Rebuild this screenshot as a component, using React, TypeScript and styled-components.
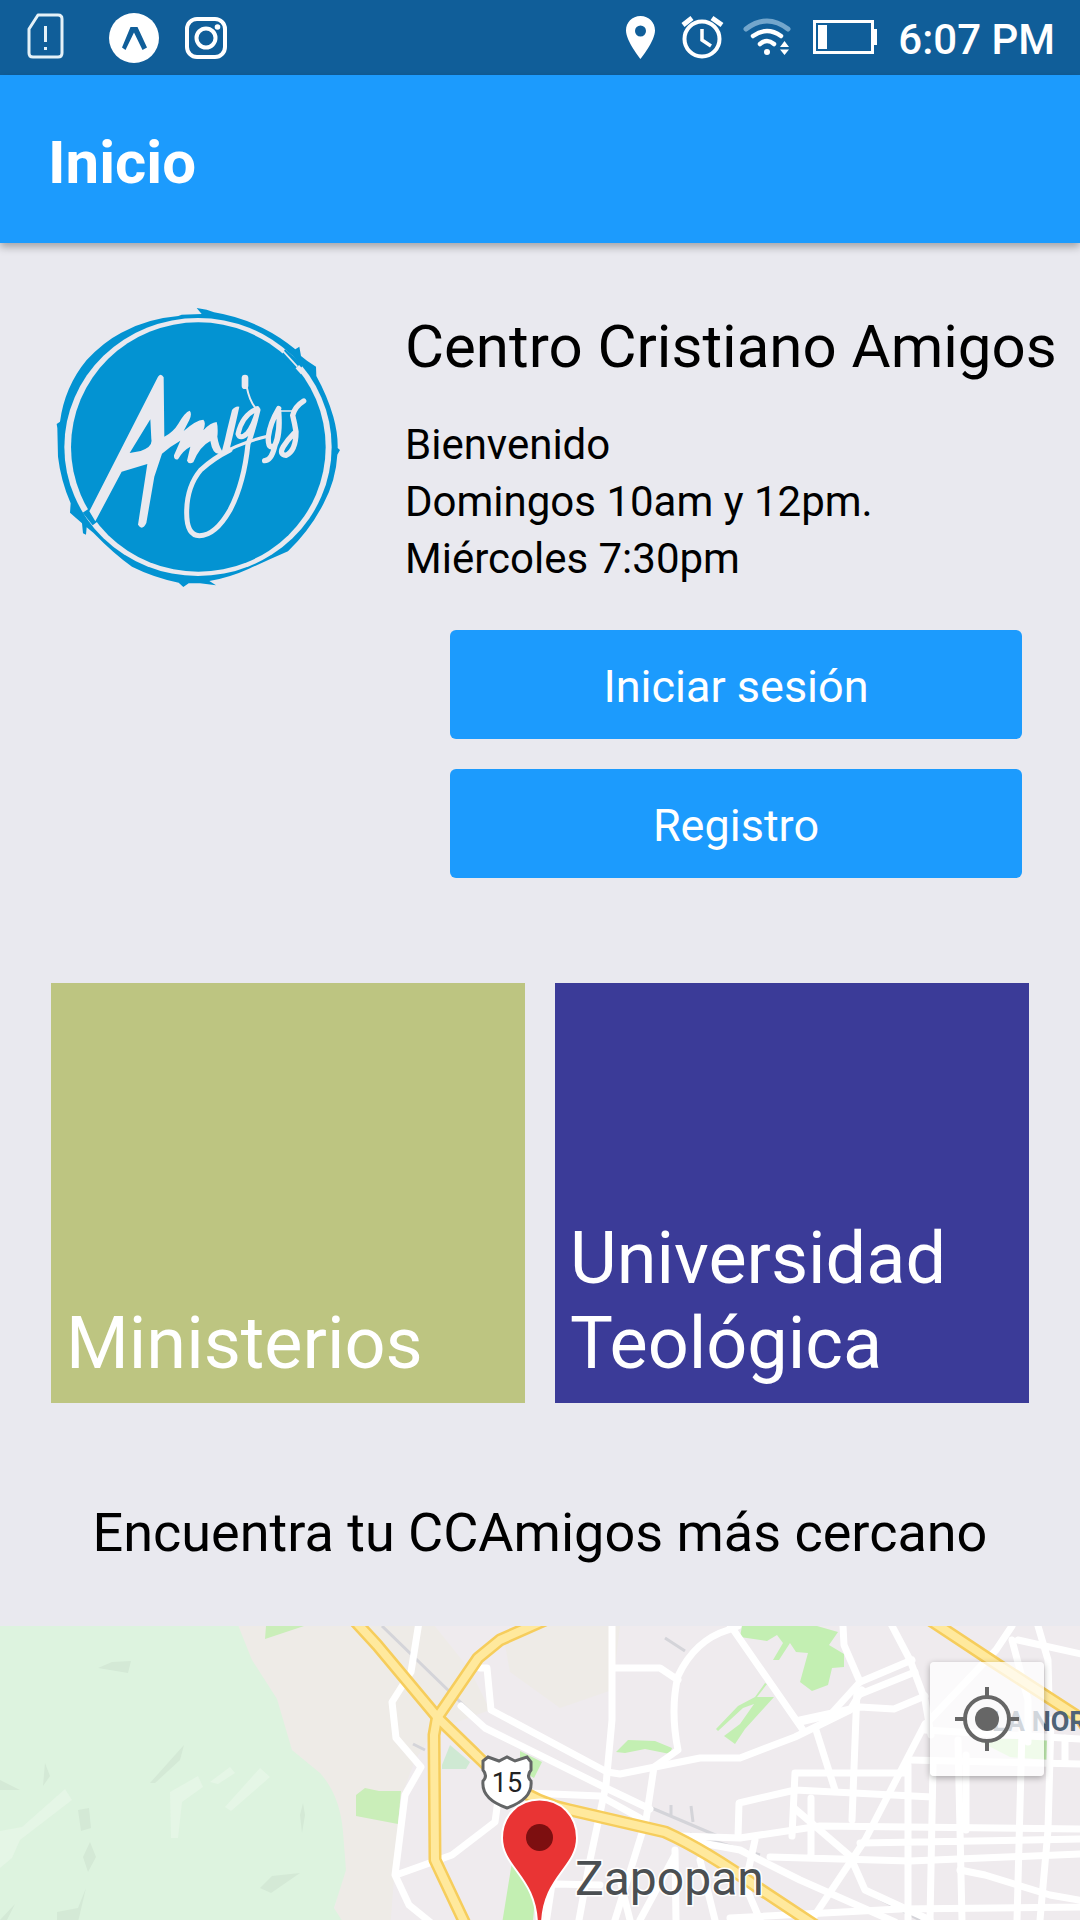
import React from 'react';
import styled, { createGlobalStyle } from 'styled-components';

const GlobalStyle = createGlobalStyle`
  *, *::before, *::after { box-sizing: border-box; }
  body { margin: 0; background: #e9e9ef; }
  h1, h2, p { margin: 0; }
`;

const Screen = styled.div`
  min-height: 100vh;
  display: flex;
  flex-direction: column;
  background: #e9e9ef;
  color: #000;
  font-family: Roboto, 'Liberation Sans', sans-serif;
`;

const StatusBar = styled.div`
  height: 75px;
  display: flex;
  align-items: center;
  justify-content: space-between;
  padding: 0 25px 0 24px;
  background: #105e99;
  color: #fff;
`;

const StatusGroup = styled.div<{ $gap: number }>`
  display: flex;
  align-items: center;
  gap: ${(p) => p.$gap}px;
  svg { display: block; flex: none; }
`;

const Clock = styled.time`
  font-size: 42px;
  line-height: 50px;
  font-weight: 500;
  padding-top: 4px;
`;

const AppBar = styled.header`
  height: 168px;
  display: flex;
  align-items: center;
  padding: 8px 48px 0;
  background: #1c9bfd;
  box-shadow: 0 4px 8px rgba(0, 0, 0, 0.3);
`;

const AppTitle = styled.h1`
  font-size: 60px;
  line-height: 70px;
  font-weight: 700;
  color: #fff;
`;

const Hero = styled.section`
  display: flex;
  align-items: flex-start;
  gap: 57px;
  padding: 54px 0 0 48px;
`;

const Logo = styled.svg`
  flex: none;
  width: 300px;
  height: 300px;
`;

const HeroBody = styled.div`
  flex: 1;
  min-width: 0;
  padding-top: 15px;
`;

const ChurchName = styled.h2`
  font-size: 60px;
  line-height: 70px;
  font-weight: 400;
  white-space: nowrap;
`;

const Schedule = styled.p`
  margin-top: 34px;
  font-size: 42px;
  line-height: 57px;
`;

const Actions = styled.div`
  display: flex;
  flex-direction: column;
  gap: 30px;
  margin: 43px 58px 0 45px;
`;

const ActionButton = styled.button`
  height: 109px;
  border: 0;
  border-radius: 6px;
  padding: 4px 0 0;
  background: #1c9bfd;
  color: #fff;
  font: 400 45px/53px Roboto, 'Liberation Sans', sans-serif;
`;

const Tiles = styled.nav`
  display: grid;
  grid-template-columns: 1fr 1fr;
  gap: 30px;
  padding: 105px 51px 0;
`;

const Tile = styled.a<{ $color: string }>`
  height: 420px;
  display: flex;
  align-items: flex-end;
  padding: 0 15px 17px;
  background: ${(p) => p.$color};
  color: #fff;
  font-size: 72px;
  line-height: 85px;
  text-decoration: none;
`;

const MapTitle = styled.h2`
  padding: 98px 0 61px;
  font-size: 54px;
  line-height: 64px;
  font-weight: 400;
  text-align: center;
`;

const MapArea = styled.section`
  position: relative;
  flex: 1;
  min-height: 294px;
  overflow: hidden;
  background: #eeebee;
`;

const MapCanvas = styled.svg`
  position: absolute;
  inset: 0;
  width: 100%;
  height: 100%;
`;

const LocateButton = styled.button`
  position: absolute;
  top: 36px;
  right: 36px;
  width: 114px;
  height: 114px;
  border: 0;
  border-radius: 4px;
  padding: 0;
  display: grid;
  place-items: center;
  background: rgba(255, 255, 255, 0.74);
  box-shadow: 0 2px 6px rgba(0, 0, 0, 0.3);
`;

const SimIcon = () => (
  <svg width="42" height="50" viewBox="0 0 42 50" fill="none" stroke="#e4f1f8" strokeWidth="3">
    <path d="M14 2H34Q38 2 38 6V40Q38 44 34 44H9Q5 44 5 40V16Z" strokeLinejoin="round" />
    <path d="M21.500 13V29M21.500 34V37" />
  </svg>
);

const ExpoIcon = () => (
  <svg width="50" height="50" viewBox="0 0 50 50">
    <circle cx="25" cy="25" r="25" fill="#fff" />
    <path d="M21.500 14H28.500L38 34.500L33.500 37L25 19.500L16.500 37L13 34.500Z" fill="#105e99" />
  </svg>
);

const InstagramIcon = () => (
  <svg width="44" height="44" viewBox="0 0 44 44" fill="none" stroke="#fff" strokeWidth="4">
    <rect x="3" y="3" width="38" height="38" rx="10" />
    <circle cx="22" cy="22" r="9.500" />
    <circle cx="33.500" cy="11" r="2.800" fill="#fff" stroke="none" />
  </svg>
);

/* Location, alarm, wifi and battery share one 50px-high strip. */
const SystemIcons = () => (
  <svg width="254" height="50" viewBox="624 13 254 50" fill="none" stroke="#fff">
    <path
      d="M640.500 16C632 16 626 22.500 626 30.500C626 41 640.500 59 640.500 59S655 41 655 30.500C655 22.500 649 16 640.500 16ZM640.500 25.500A5.500 5.500 0 1 1 640.500 36.500A5.500 5.500 0 1 1 640.500 25.500Z"
      fill="#fff"
      fillRule="evenodd"
      stroke="none"
    />
    <circle cx="702" cy="39" r="17.500" strokeWidth="4" />
    <path d="M702 29V40L711 46" strokeWidth="3.500" />
    <path d="M683 25L692 18M712 18L722 25" strokeWidth="5" />
    <path d="M746 29Q767 13 788 29" strokeWidth="5" stroke="#73a6cc" strokeLinecap="round" />
    <path d="M753 36Q767 26 781 36M760 44Q767 38 774 44" strokeWidth="4.500" strokeLinecap="round" />
    <circle cx="767" cy="52" r="3" fill="#fff" stroke="none" />
    <path d="M780 47L784.500 41L789 47ZM780 49.500H789L784.500 55Z" fill="#fff" stroke="none" />
    <rect x="814.500" y="21.500" width="58" height="31" strokeWidth="3" />
    <rect x="818" y="25" width="9" height="24" fill="#fff" stroke="none" />
    <path d="M874 29H877V45H874Z" fill="#fff" stroke="none" />
  </svg>
);

const AmigosLogo = () => (
  <Logo viewBox="24 21 900 900" role="img" aria-label="Amigos">
    <path
      d="M415 78L425 74L485 72L470 54L500 59L522 67Q600 80 668 114Q720 140 766 178L778 170L783 198L801 212L828 230L829 258Q862 318 880 380Q894 430 893 474L900 480L892 494Q888 570 850 642Q810 720 744 784Q680 812 627 836Q570 862 508 873L528 886L480 880L446 880L430 891L416 878Q340 862 276 830Q220 790 160 728L140 712L138 734L129 730L126 700L90 668L92 640Q62 570 54 500L52 414L50 402L60 395Q74 290 140 210Q190 156 244 128Q320 86 415 78Z"
      fill="#0393d2"
    />
    <ellipse cx="474" cy="471" rx="401" ry="387" fill="#e9e9ef" />
    <ellipse cx="475" cy="471" rx="382" ry="374" fill="#0393d2" />
    <path d="M735 178L790 225L776 242L722 200ZM128 668L146 656L176 692L158 706Z" fill="#0393d2" />
    <g fill="none" stroke="#e9e9ef">
      <path d="M728 182L772 230" strokeWidth="5" />
      <path d="M772 230L788 248" strokeWidth="14" />
    </g>
    <path
      d="M148 664L354 260Q363 248 371 262L373 440Q400 426 415 401Q435 366 449 362Q457 371 448 390L431 423Q468 390 490 389Q499 398 490 421Q512 397 530 396Q535 413 532 440Q536 466 546 482Q555 450 561 421L576 360Q586 347 598 350Q587 402 570 473Q557 493 540 492Q518 495 511 453Q479 469 460 517Q447 525 441 512L451 470Q428 482 414 508Q401 511 402 496L421 452Q389 470 366 491L343 560L319 699Q307 724 294 704L322 522L245 545L166 694ZM331 388L334 448Q339 470 302 483L269 489Z"
      fill="#e9e9ef"
      fillRule="evenodd"
    />
    <g fill="none" stroke="#e9e9ef" strokeLinecap="round" strokeLinejoin="round">
      <path d="M615 264L615 287" strokeWidth="20" />
      <path d="M620 290Q628 331 645 352" strokeWidth="6" />
      <path d="M652 356Q606 376 594 432Q600 450 622 430Q640 410 654 360Q640 420 624 462Q612 580 570 660Q526 737 478 737Q440 736 440 668Q440 590 482 540Q520 505 570 480" strokeWidth="15" />
      <path d="M540 494Q600 458 686 438" strokeWidth="9" />
      <path d="M716 356Q690 400 685 440Q683 482 704 466Q722 440 716 362Q722 420 704 470Q694 512 674 512" strokeWidth="16" />
      <path d="M720 363L760 363" strokeWidth="5" />
      <path d="M791 333Q764 350 758 376Q764 400 768 425Q768 482 738 496Q716 494 730 470Q742 450 762 430" strokeWidth="16" />
    </g>
  </Logo>
);

const roadsMajor = [
  'M354 1620L377 1645L438 1718L475 1754Q520 1800 570 1810L665 1832Q705 1850 760 1889L822 1930',
  'M545 1620L500 1640L478 1658L437 1718L434 1735L435 1860L468 1930',
  'M930 1620L995 1663L1080 1718L1095 1740',
];

const roadsMinor = [
  'M419 1622L411 1672L392 1702L396 1738L421 1767L405 1795L395 1875L409 1905L430 1922',
  'M396 1875L452 1855L495 1822L498 1800',
  'M461 1706L485 1728L606 1788L650 1809',
  'M480 1668L487 1668L491 1710L607 1772L620 1774L700 1758L740 1758L795 1737L850 1710L862 1690',
  'M612 1622L612 1720L606 1785L590 1860L579 1920',
  'M613 1668L660 1668L678 1680',
  'M738 1626L728 1630Q695 1640 678 1676Q670 1710 678 1750L654 1767L646 1820L615 1920',
  'M528 1793L600 1796L640 1818',
  'M728 1622L803 1730',
  'M843 1626L844 1645L860 1682L830 1715L800 1722',
  'M890 1622L910 1660L925 1700L931 1735',
  'M860 1682L912 1660M858 1695L915 1672M800 1720L860 1707L894 1709L925 1696',
  'M857 1690L852 1820',
  'M925 1724L865 1840L805 1930',
  'M816 1730L835 1790',
  'M792 1836L795 1773H905M738 1837L739 1803L795 1790L932 1797',
  'M794 1808L850 1856L865 1890L930 1920',
  'M680 1836L740 1838L820 1826L1080 1829',
  'M680 1839L740 1850L800 1880L895 1922',
  'M755 1840L745 1885L760 1920',
  'M811 1798V1855M770 1857L910 1861L1080 1854',
  'M860 1843L1080 1839M908 1765V1920M933 1765L930 1920M958 1740L962 1920',
  'M966 1755V1830M1022 1730L1017 1920M1051 1720L1048 1830L1040 1920',
  'M910 1760L1080 1764M925 1730L1080 1739M1065 1738V1760',
  'M1012 1626L996 1650L925 1725M1012 1640L1028 1700V1742M1038 1626L1048 1660L1049 1700M1018 1640L1090 1656',
  'M960 1870L985 1875L1050 1895L1090 1902M730 1918L900 1909L1090 1907',
  'M555 1884L600 1885M620 1880L630 1920M640 1920L675 1855M675 1850L676 1920M700 1860L715 1920M545 1930L552 1884',
];

const relief = [
  'M98 1668L112 1662L131 1661L128 1673Z',
  'M150 1783L184 1745L180 1760L155 1783Z',
  'M45 1763L50 1776L43 1786ZM0 1780L20 1790H0Z',
  'M78 1810L89 1808L91 1828L81 1831Z',
  'M90 1842L96 1857L88 1872L83 1857Z',
  'M260 1888L272 1876L300 1873L271 1893Z',
  'M303 1803L305 1815L302 1833L300 1815Z',
  'M57 1912L78 1908L86 1888L78 1922H57ZM0 1920L15 1904L7 1920Z',
];

const CityMap = () => (
  <MapCanvas viewBox="0 1626 1080 294" preserveAspectRatio="xMinYMin slice" role="img" aria-label="Mapa de Zapopan">
    <rect y="1620" width="1080" height="310" fill="#efebee" />
    <path d="M230 1620H430L470 1670L490 1710L435 1730L415 1760L400 1800L390 1930H330L345 1860Z" fill="#eeebe7" />
    <path d="M505 1645L545 1626H620L612 1690L560 1708L535 1690L510 1672Z" fill="#eeebe7" />
    <path d="M0 1620H236L252 1660L277 1699L292 1750L320 1773Q340 1795 343 1832L346 1870L334 1908L348 1930H0Z" fill="#ddf3df" />
    <g fill="#d4e9d6">
      {relief.map((d) => (
        <path key={d} d={d} />
      ))}
    </g>
    <g fill="#e5f6e6">
      <path d="M0 1831L22 1827L65 1789L72 1800L20 1840L12 1858L0 1868Z" />
      <path d="M170 1792L198 1776L203 1787L182 1802L178 1838H171Z" />
      <path d="M210 1782L230 1767L235 1773L218 1784ZM225 1807L260 1768L270 1777L231 1811Z" />
    </g>
    <path d="M266 1626H304L265 1639ZM356 1795L365 1788L379 1791L401 1791L398 1824L356 1816Z" fill="#caeeb9" />
    <path d="M442 1765L450 1745L470 1762L466 1769H442Z" fill="#cfe9d3" />
    <g fill="#c3efb2">
      <path d="M520 1751L542 1762L534 1778L520 1770ZM512 1862L535 1900L532 1930H501Z" />
      <path d="M616 1752L628 1740L655 1741L672 1748L670 1754L645 1749L625 1753Z" />
      <path d="M742 1626H817L838 1632L829 1645L844 1654V1667L832 1668L828 1685L812 1691L800 1682L808 1653L796 1652L790 1643L779 1660H773L783 1643L777 1635L767 1641L740 1637Z" />
      <path d="M716 1729L738 1706L755 1697L765 1683L767 1684L757 1697L774 1697L745 1729L735 1744L724 1736L740 1724L754 1704L743 1708L718 1731Z" />
      <path d="M975 1739H1048V1760L1010 1757Z" />
    </g>
    <g fill="none" stroke="#d4d4d9" strokeWidth="3">
      <path d="M382 1626L487 1728M600 1786L720 1837M665 1638L685 1651M690 1834L760 1855M868 1893L920 1920M413 1744L425 1750M671 1805V1815M691 1806L693 1822" />
    </g>
    <g fill="none" stroke="#fff" strokeWidth="7" strokeLinejoin="round" strokeLinecap="round">
      {roadsMinor.map((d) => (
        <path key={d} d={d} />
      ))}
    </g>
    <g fill="none" stroke="#f6cd5c" strokeWidth="13" strokeLinejoin="round">
      {roadsMajor.map((d) => (
        <path key={d} d={d} />
      ))}
    </g>
    <g fill="none" stroke="#ffe99d" strokeWidth="8" strokeLinejoin="round">
      {roadsMajor.map((d) => (
        <path key={d} d={d} />
      ))}
    </g>
    <path
      d="M483 1761L488 1757L499 1761L507 1757L515 1761L527 1757L531 1762V1770Q526 1776 531 1781Q533 1799 507 1808Q481 1799 483 1781Q488 1776 483 1770Z"
      fill="#fff"
      stroke="#636566"
      strokeWidth="3"
    />
    <g fontFamily="Roboto, 'Liberation Sans', sans-serif">
      <text x="507" y="1792" fontSize="27" textAnchor="middle" fill="#222">15</text>
      <text x="575" y="1895" fontSize="48" fill="#4b4f52" stroke="#fff" strokeWidth="3" paintOrder="stroke">Zapopan</text>
      <text x="992" y="1731" fontSize="27" fontWeight="700" fill="#4f6377">LA NOR</text>
    </g>
    <path
      d="M539.500 1799.500C518 1799.500 502 1816 502 1838C502 1868 537 1877 537 1926H542C542 1877 577 1868 577 1838C577 1816 561 1799.500 539.500 1799.500Z"
      fill="#e93434"
      stroke="#fff"
      strokeWidth="2"
    />
    <circle cx="539.500" cy="1837.500" r="13.500" fill="#7d0f10" />
  </MapCanvas>
);

export default function App() {
  return (
    <Screen>
      <GlobalStyle />
      <StatusBar>
        <StatusGroup $gap={43}>
          <SimIcon />
          <StatusGroup $gap={25}>
            <ExpoIcon />
            <InstagramIcon />
          </StatusGroup>
        </StatusGroup>
        <StatusGroup $gap={20}>
          <SystemIcons />
          <Clock>6:07 PM</Clock>
        </StatusGroup>
      </StatusBar>
      <AppBar>
        <AppTitle>Inicio</AppTitle>
      </AppBar>
      <main>
        <Hero>
          <AmigosLogo />
          <HeroBody>
            <ChurchName>Centro Cristiano Amigos</ChurchName>
            <Schedule>
              Bienvenido
              <br />
              Domingos 10am y 12pm.
              <br />
              Miércoles 7:30pm
            </Schedule>
            <Actions>
              <ActionButton type="button">Iniciar sesión</ActionButton>
              <ActionButton type="button">Registro</ActionButton>
            </Actions>
          </HeroBody>
        </Hero>
        <Tiles>
          <Tile href="#ministerios" $color="#bdc581">Ministerios</Tile>
          <Tile href="#universidad" $color="#3b3b98">Universidad Teológica</Tile>
        </Tiles>
        <MapTitle>Encuentra tu CCAmigos más cercano</MapTitle>
      </main>
      <MapArea>
        <CityMap />
        <LocateButton type="button" aria-label="Mi ubicación">
          <svg width="64" height="64" viewBox="0 0 64 64" fill="none" stroke="#666" strokeWidth="4">
            <circle cx="32" cy="32" r="22" />
            <circle cx="32" cy="32" r="12" fill="#666" stroke="none" />
            <path d="M32 0V9M32 55V64M0 32H9M55 32H64" />
          </svg>
        </LocateButton>
      </MapArea>
    </Screen>
  );
}
